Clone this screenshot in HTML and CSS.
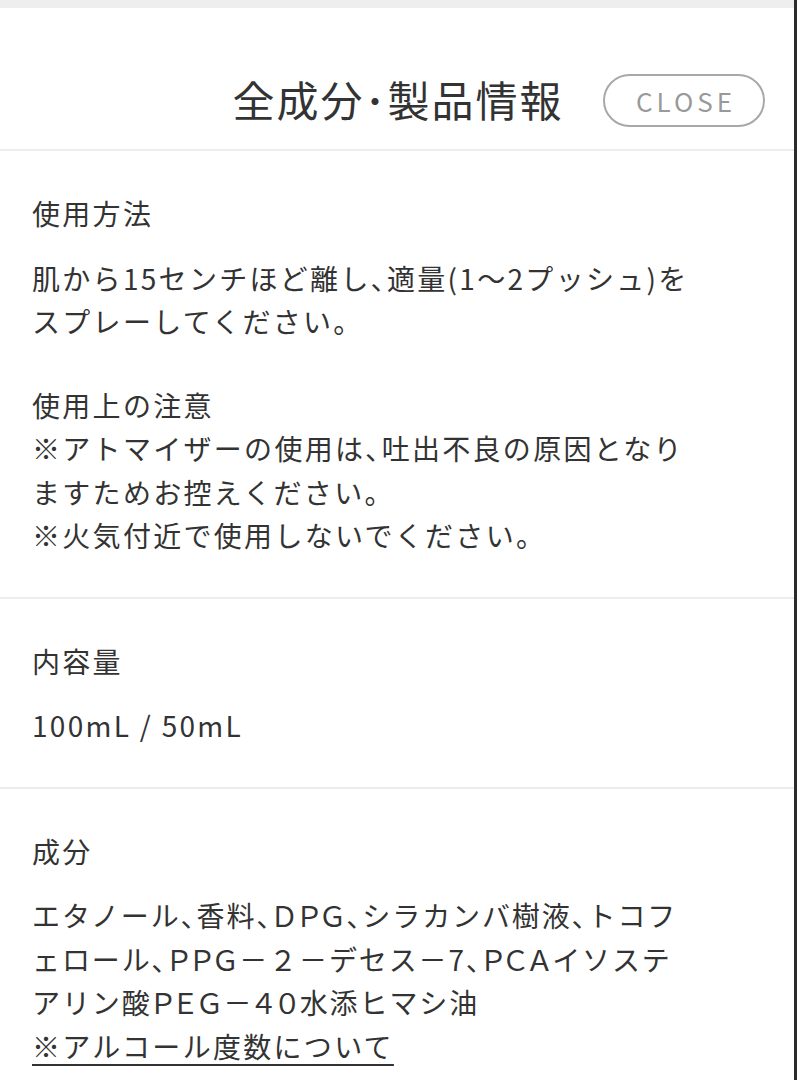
FILE: index.html
```html
<!DOCTYPE html>
<html lang="ja">
<head>
    <meta charset="UTF-8">
    <meta name="viewport" content="width=device-width, initial-scale=1.0">
    <title>全成分・製品情報</title>
    <link rel="stylesheet" href="styles.css">
</head>
<body>
    <div class="modal">
        <div class="modal-top"></div>
        <div class="modal-header">
            <h1>全成分･製品情報</h1>
            <button class="close-btn" id="close-btn">CLOSE</button>
        </div>
        <div class="section">
            <h2>使用方法</h2>
            <p>肌から15センチほど離し<span class="tight">、</span>適量(1～2プッシュ)を<br>スプレーしてください。</p>
            <p class="note">使用上の注意<br>※アトマイザーの使用は<span class="tight">、</span>吐出不良の原因となり<br>ますためお控えください。<br>※火気付近で使用しないでください。</p>
        </div>
        <div class="section">
            <h2>内容量</h2>
            <p>100mL / 50mL</p>
        </div>
        <div class="section">
            <h2>成分</h2>
            <p class="ingredients">エタノール<span class="tight">、</span>香料<span class="tight">、ＤＰＧ、</span>シラカンバ樹液<span class="tight">、</span>トコフ<br>ェロール<span class="tight">、ＰＰＧ</span>－２－デセス－7<span class="tight">、ＰＣＡ</span>イソステ<br>アリン酸<span class="tight">ＰＥＧ－４０</span>水添ヒマシ油<br><a href="#">※アルコール度数について</a></p>
        </div>
    </div>
</body>
</html>
```

FILE: styles.css
```css
body {
    margin: 0;
    background: #ffffff;
    font-family: "Noto Sans CJK JP", "Noto Sans", sans-serif;
    color: #333;
}
.modal {
    width: 794px;
    border-right: 3px solid #2b2b2b;
    min-height: 1080px;
    background: #fff;
}
.modal-top {
    height: 8px;
    background: #eeeeee;
}
.modal-header {
    position: relative;
    box-sizing: border-box;
    height: 143px;
    padding-top: 70px;
    border-bottom: 2px solid #ececec;
    display: flex;
    justify-content: center;
    align-items: flex-start;
}
.modal-header h1 {
    margin: 0;
    font-size: 42px;
    font-weight: 400;
    letter-spacing: 2px;
    color: #333;
    line-height: 1;
    padding-left: 2px;
}
.close-btn {
    position: absolute;
    right: 29px;
    top: 66px;
    width: 162px;
    height: 53px;
    border: 2px solid #a8a8a8;
    border-radius: 27px;
    background: #fff;
    color: #999;
    font-family: "Noto Sans CJK JP", "Noto Sans", sans-serif;
    font-size: 26px;
    letter-spacing: 4px;
    padding: 0 0 0 4px;
    cursor: pointer;
}
.section {
    padding: 41px 32px 39px;
    border-bottom: 2px solid #ececec;
}
.section:last-child {
    border-bottom: none;
}
.section h2 {
    margin: 0 0 21px;
    font-size: 28px;
    font-weight: 400;
    line-height: 43.5px;
    letter-spacing: 2.3px;
}
.section p {
    margin: 0;
    font-size: 28px;
    line-height: 43.5px;
    letter-spacing: 2.3px;
}
.section .note {
    margin-top: 40px;
}
.tight {
    font-feature-settings: "palt";
}
.section .ingredients {
    letter-spacing: 1.9px;
}
.section a {
    color: #333;
    text-decoration: underline;
    text-decoration-thickness: 2px;
    text-underline-offset: 6px;
    letter-spacing: 2.3px;
}
```
